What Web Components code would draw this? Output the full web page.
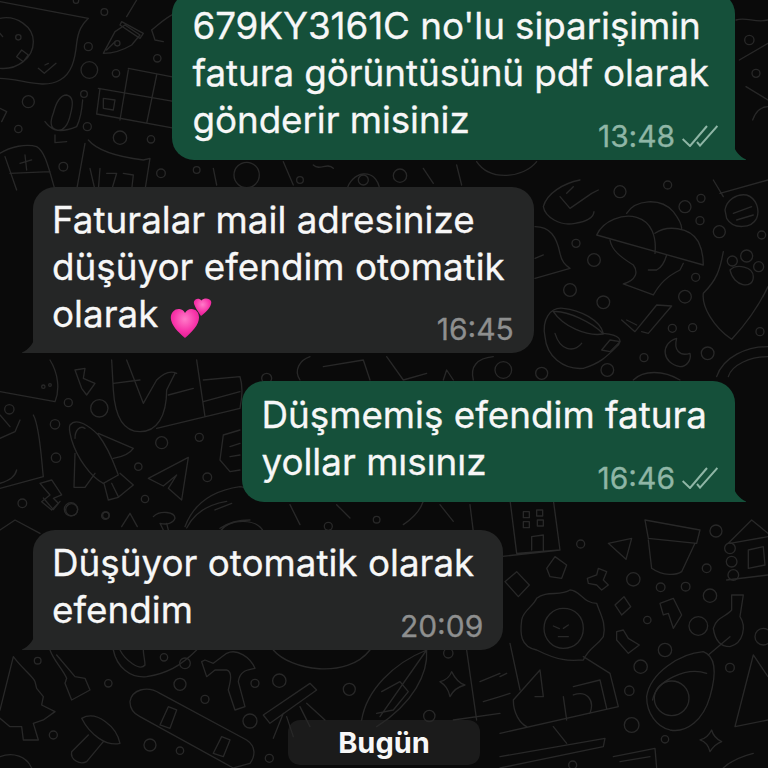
<!DOCTYPE html>
<html lang="tr">
<head>
<meta charset="utf-8">
<title>Sohbet</title>
<style>
  html, body { margin: 0; height: 100%; background: #0a0a0a; }
  chat-bubble:nth-of-type(1) { margin-bottom: -1px; padding-left: 20px; padding-right: 26px; letter-spacing: -0.07px; }
  chat-bubble:nth-of-type(2) { padding-bottom: 16px; }
</style>
</head>
<body>
<chat-screen>
  <chat-bubble side="out" time="13:48">679KY3161C no'lu siparişimin<br>fatura görüntüsünü pdf olarak<br>gönderir misiniz</chat-bubble>
  <chat-bubble side="in" time="16:45">Faturalar mail adresinize<br>düşüyor efendim otomatik<br>olarak <love-hearts></love-hearts></chat-bubble>
  <chat-bubble side="out" time="16:46">Düşmemiş efendim fatura<br>yollar mısınız</chat-bubble>
  <chat-bubble side="in" time="20:09">Düşüyor otomatik olarak<br>efendim</chat-bubble>
  <day-chip>Bugün</day-chip>
</chat-screen>

<script>
// doodles are written in the coordinates of 3x crops, hence the scale(1/3) on each group
const DOODLES = [
  { x: 0, y: 0, paths: [
    'M0 55C50 45 100 80 100 125C100 175 50 210 0 205M0 100l8 10M50 170L65 150L85 165L70 185z',
    'M0 5L265 55C245 75 235 90 230 130C225 180 215 220 180 240C130 270 60 235 0 235M115 205l18 15l35-30M135 195l10-5',
    'M310 160L345 95L375 75L420 105L395 135C370 150 340 160 310 160zM365 65L430 100L420 115L360 75zM380 50L410 0M345 125L320 150',
    'M160 340C170 300 185 285 200 285C220 290 220 310 212 340C205 375 190 395 170 390C150 385 150 365 160 340zM135 365C150 385 170 405 230 380C240 360 245 340 248 300M165 405L165 428L200 425',
    'M295 265L525 305M290 342L525 385M300 265L290 342M385 210L360 360M470 225L440 370M385 205L525 232M310 295L345 300L340 330L310 325z',
    'M0 460C30 440 80 430 110 440C135 455 145 500 165 570M15 470L50 570M30 520L150 515M60 490L95 480M75 465L80 510',
    'M265 420C290 450 350 470 430 480L450 475L435 570M255 430L230 570M270 505L285 570M300 505L295 570M320 520L350 520L335 570M370 520L400 525L395 570',
    'M455 90C480 70 500 50 525 40M455 90L465 120L490 125M0 325L20 335L5 365'
  ], dots: [[313,36,10],[265,140,12],[268,210,25],[348,220,11],[252,282,10],[85,305,18],[55,387,11],[262,380,12],[360,413,20],[453,418,11],[472,175,11],[483,520,13],[190,500,13],[228,2,8],[352,130,8],[55,112,8]] },
  { x: 520, y: 180, paths: [
    'M230 165C250 120 310 100 350 112C395 125 410 170 405 220M320 100C345 60 420 50 460 95C475 115 485 130 485 145M405 160C440 135 510 140 535 185C545 205 550 235 550 255L230 165',
    'M270 180C275 210 300 230 340 255C355 275 350 300 310 312L400 345C420 310 440 290 480 270L490 250M385 270L410 270Q430 260 440 225',
    'M610 215C600 270 590 300 550 340C545 380 580 440 635 478C680 430 720 370 744 320M630 270C640 320 700 330 700 290C700 260 650 250 630 270z',
    'M75 470C65 420 90 380 130 385C180 390 240 420 250 460C300 465 310 480 290 500C260 530 240 550 190 565C130 570 80 530 75 470zM100 395C140 390 220 430 250 462C200 470 130 440 100 395zM105 460C120 510 160 520 185 490',
    'M245 510L270 480L300 485L270 515zM305 420L345 455L410 375L455 378L385 460L365 455M320 420L350 435',
    'M470 475C420 490 425 550 480 560C500 560 515 540 510 520C480 530 460 510 470 475z',
    'M70 80C80 40 130 10 180 0M70 80C75 110 120 140 165 130C200 125 220 115 222 95M120 50L150 85L215 40L235 30M140 40L160 20',
    'M45 140C90 140 110 170 120 220C125 245 135 255 150 265L45 295M45 235L70 225',
    'M615 90C620 60 650 40 680 45C710 55 720 90 710 115C695 145 640 150 620 115zM640 100L695 80M650 120L700 105M600 40L744 0M580 0L610 50',
    'M590 590C610 530 680 500 744 500M625 590C635 555 690 530 744 530M340 600C370 570 430 570 480 600'
  ], dots: [[300,35,18],[443,15,12],[495,80,18],[543,55,12],[540,122,12],[598,155,18],[725,165,12],[168,190,12],[222,240,19],[150,330,19],[250,367,19],[495,350,19],[527,292,12],[457,445,12],[518,443,12],[372,533,12],[563,520,19],[262,570,19],[65,580,18],[720,455,12],[637,243,15],[680,228,18],[716,260,15]] },
  { x: 0, y: 360, paths: [
    'M150 0C175 40 180 90 165 125L0 95M225 30L255 25L250 55L285 70L260 105L245 85L225 30',
    'M335 0L340 90C345 170 370 215 420 215C470 215 500 170 500 90L525 40M380 0L430 130L470 60C490 40 510 30 530 40M340 70L420 60M505 105L580 85',
    'M470 205L720 145M590 0L615 170M610 60L720 50C730 80 725 120 720 145M610 125L720 95',
    'M210 195C230 170 270 200 295 225C330 270 345 320 355 345L310 370C270 350 230 290 215 240C210 220 205 205 210 195zM295 220L400 265C390 280 370 290 340 295M225 280L222 382L255 382L285 340M312 370L325 420L355 412L400 375L360 340M335 370L355 410M225 235C225 210 240 195 255 205',
    'M445 355L565 292L545 420L505 385L530 345L490 378L445 355z',
    'M120 370L155 360L185 405L160 415L175 430L155 450L125 425L150 405z',
    'M100 165C120 200 125 310 130 350L0 385M60 180L45 215L0 235M0 165L30 200M0 370C30 360 45 350 50 330',
    'M365 500L390 460L412 500M460 470C480 450 525 455 525 475C520 490 500 495 480 490L490 510M500 490L505 510',
    'M555 500C585 420 650 390 720 380L750 385M645 450L695 430M660 505C690 485 720 480 750 480M0 510L45 480L120 520',
    'M670 225L720 210M660 300L670 225M660 300L690 335L720 330M690 260L720 250M690 290L720 285'
  ], dots: [[205,128,12],[298,145,26],[28,148,14],[165,193,14],[485,248,18],[598,232,12],[168,293,14],[415,320,11],[622,352,13],[67,430,13],[213,448,20],[435,417,11],[316,467,11],[130,80,5],[150,75,4]] },
  { x: 0, y: 640, paths: [
    'M40 50L0 210M40 50C70 90 100 110 105 125L110 145L130 170L125 195L165 215L130 240L100 250L115 300L70 300L65 260L30 260L0 235',
    'M150 30C160 60 190 90 200 115L195 130L215 180L270 150L255 115L225 110L170 45',
    'M340 30C350 80 390 115 440 110C500 100 540 80 590 30M360 30C375 60 420 95 435 75C435 60 430 45 430 30',
    'M605 65L620 110L645 90L680 90C700 95 690 130 685 150L705 210L735 200L715 125C720 90 745 90 765 85C750 50 710 25 680 40L640 70L615 60z',
    'M390 185C395 150 440 135 480 160L740 300C770 320 765 350 750 370L700 384L420 230C400 220 390 205 390 185zM480 255L505 200L530 210L510 265zM640 340L665 290L690 300L670 350z',
    'M790 225L930 130L950 150L810 250zM850 220L820 295M920 190L975 240M860 230L880 290M900 200L930 260',
    'M245 235C290 210 350 260 360 310C320 320 270 285 245 235zM265 285L215 335C210 360 240 375 260 365L310 305',
    'M1085 240C1100 150 1180 70 1280 30C1285 100 1240 190 1130 260M1280 30L1140 230M1145 155L1200 125L1225 155L1180 210L1130 220',
    'M1320 125C1340 120 1350 110 1355 95C1365 115 1375 130 1395 135C1375 140 1360 150 1350 170C1345 145 1335 135 1320 125z',
    'M1400 30L1430 240M1440 125L1500 100M1450 185L1500 170M1360 240L1500 220M0 350C40 335 80 350 95 384M820 30C870 90 1040 120 1110 30'
  ], dots: [[113,62,10],[325,130,11],[492,52,11],[555,70,16],[540,133,18],[615,178,12],[765,130,12],[838,122,20],[750,243,21],[1048,148,18],[450,315,18],[540,332,11],[160,285,12],[808,355,12],[1288,228,17],[1345,40,14]] },
  { x: 500, y: 500, paths: [
    'M30 0L50 160L180 150L160 0M95 150L95 110L130 105L130 150M0 170L180 150M70 35h18v18h-18zM110 30h18v18h-18zM70 65h18v18h-18zM112 60h18v18h-18z',
    'M435 60L600 90L590 130L445 115zM445 120L455 205C490 230 530 225 545 215L585 130M325 130L395 115L378 178z',
    'M140 205L165 170L200 195L185 235L150 230zM262 235L290 225L295 205L320 215L310 240L325 255L305 270L290 255L265 250z',
    'M65 360C70 330 100 320 110 295C140 270 180 290 210 270C240 270 250 310 290 310C300 340 320 370 310 410C290 440 270 440 250 480C220 480 190 490 110 450C60 440 60 400 65 360z',
    'M132 385C132 350 160 325 190 325C225 325 250 350 250 385C250 420 225 445 190 445C160 445 132 420 132 385zM160 378l18 8M205 375l-15 10M175 410h30',
    'M120 510L40 600C40 640 60 670 80 680M250 470L330 520L355 620L0 700M220 560L300 540L320 625M190 590L200 660M220 585C260 570 285 600 270 640M120 510L130 590L105 590',
    'M350 395L370 390L385 415L418 435L385 460L350 420zM345 315L372 290L392 320L365 345zM15 245L50 215L88 255L55 290z',
    'M440 590C450 520 540 460 610 455C650 470 650 520 630 590C610 660 560 700 510 690C470 680 440 640 440 590zM458 600C470 540 560 500 620 520',
    'M640 385C650 350 680 350 695 330L695 285L730 285L720 350C740 380 730 430 690 440C660 440 645 420 640 385zM625 465L690 410',
    'M480 310L520 295L545 345L520 385L505 340L490 345z',
    'M760 465L705 680L804 660M760 465L804 530M600 720C620 715 630 700 635 690C640 710 655 720 665 725C650 730 640 740 630 755C625 735 615 725 600 720z',
    'M685 130L755 60L804 100M690 130L804 110M680 240L804 225M745 150L790 140L795 195L745 205z',
    'M0 770L315 715L310 740L0 804M340 770L465 745L470 804M360 785L450 770M160 680L200 730M30 430L60 570M0 530L20 520M0 590L30 580',
    'M760 760C720 770 690 785 670 804'
  ], dots: [[242,132,12],[400,238,20],[482,262,13],[557,260,13],[620,205,13],[630,287,20],[442,360,11],[595,378,28],[648,93,18],[495,450,20],[422,500,20],[388,572,14],[690,503,13],[395,675,22],[495,718,11],[218,795,12],[790,410,25],[515,595,52],[690,145,16],[695,185,16],[700,225,16]] },
  { x: 170, y: 155, paths: ['M130 40L140 90M340 20L370 90M430 30C450 50 470 20 490 40M530 108C540 50 620 30 630 108M760 40L790 85M860 30L875 90M920 20C960 80 1060 70 1100 20'],
    dots: [[80,45,10],[230,60,38],[390,75,10],[690,62,20],[580,75,15]] },
  { x: 230, y: 350, paths: ['M210 90C190 60 210 30 240 20M280 50L400 30L420 90M470 20L520 90L590 70M640 90L650 60L670 90M730 90C720 50 740 25 790 20'],
    dots: [[820,60,25],[110,85,15]] },
  { x: 30, y: 498, paths: ['M40 0L70 35L90 10M470 90C490 50 530 20 590 10M570 100C600 60 680 60 700 100M780 20L810 80M920 20L960 60M1120 80C1150 60 1170 40 1180 10M1230 20L1270 70M1320 20L1330 100'],
    dots: [[125,35,18],[228,52,10],[1040,65,10],[895,85,12]] },
  { x: 736, y: 0, paths: ['M0 60C30 50 60 70 96 60M10 180L96 130M30 260L96 300M50 360C60 330 80 320 96 320'],
    dots: [[40,120,14],[60,220,12]] }
];

class DoodleLayer extends HTMLElement {
  constructor() {
    super();
    const groups = DOODLES.map(({ x, y, paths, dots }) => {
      const lines = paths.map(d => `<path d="${d}"/>`).join('');
      const circles = dots.map(([cx, cy, r]) => `<circle cx="${cx}" cy="${cy}" r="${r}"/>`).join('');
      return `<g transform="translate(${x} ${y}) scale(0.3333)">${lines}${circles}</g>`;
    }).join('');
    this.attachShadow({ mode: 'open' }).innerHTML = `
      <style>
        :host { position: absolute; inset: 0; display: block; }
        svg { display: block; filter: blur(0.35px); }
        g { fill: none; stroke: #282828; stroke-width: 4; stroke-linejoin: round; stroke-linecap: round; }
      </style>
      <svg width="768" height="768" viewBox="0 0 768 768" aria-hidden="true">${groups}</svg>`;
  }
}

const screenTemplate = document.createElement('template');
screenTemplate.innerHTML = `
  <style>
    :host {
      position: relative;
      display: flex;
      flex-direction: column;
      justify-content: flex-end;
      gap: 28px;
      width: 768px;
      height: 768px;
      padding: 0 33px 3px;
      box-sizing: border-box;
      overflow: hidden;
      background: #0a0a0a;
      color: #f7f7f7;
      font-family: Inter, "Liberation Sans", sans-serif;
    }
  </style>
  <doodle-layer></doodle-layer>
  <slot></slot>
`;

class ChatScreen extends HTMLElement {
  constructor() {
    super();
    this.attachShadow({ mode: 'open' }).appendChild(screenTemplate.content.cloneNode(true));
  }
}

const bubbleTemplate = document.createElement('template');
bubbleTemplate.innerHTML = `
  <style>
    :host {
      position: relative;
      display: block;
      flex: none;
      width: fit-content;
      padding: 9px 29px 17px 19px;
      border-radius: 22px 22px 22px 0;
      background: #252626;
      font-size: 36.8px;
      line-height: 47px;
      -webkit-text-stroke: 0.3px currentColor;
      white-space: nowrap;
      --meta: #8e8f8f;
    }
    :host([side="out"]) {
      align-self: flex-end;
      padding: 10px 28px 17px 19px;
      border-radius: 22px 22px 0 22px;
      background: #15503a;
      --meta: #8fb6a6;
    }
    .meta {
      position: absolute;
      right: 20px;
      bottom: 10px;
      display: flex;
      align-items: center;
      gap: 7px;
      font-size: 30px;
      line-height: 28px;
      color: var(--meta);
    }
    .checks { display: none; width: 36px; height: 22px; fill: none; stroke: var(--meta); stroke-width: 2; }
    :host([side="out"]) .checks { display: block; }
    :host([side="out"]) .meta { right: 17px; bottom: 10px; }
    .tail { position: absolute; bottom: 0; width: 12px; height: 14px; fill: #252626; left: -11px; transform: scaleX(-1); }
    :host([side="out"]) .tail { left: auto; right: -11px; transform: none; fill: #15503a; }
  </style>
  <slot></slot>
  <span class="meta">
    <span class="time"></span>
    <svg class="checks" viewBox="0 0 36 22"><path d="M0.6 14L8 21L25 1"/><path d="M15 17L18 20.6L35.4 1"/></svg>
  </span>
  <svg class="tail" viewBox="0 0 12 14"><path d="M0 0C1 5 5 10 12 13.6L12 14L0 14Z"/></svg>
`;

class ChatBubble extends HTMLElement {
  constructor() {
    super();
    this.attachShadow({ mode: 'open' }).appendChild(bubbleTemplate.content.cloneNode(true));
  }

  connectedCallback() {
    this.shadowRoot.querySelector('.time').textContent = this.getAttribute('time');
  }
}

const heartsTemplate = document.createElement('template');
heartsTemplate.innerHTML = `
  <style>
    :host { display: inline-block; width: 44px; height: 42px; margin: -8px 0 -8px 1px; vertical-align: -4px; }
    svg { display: block; }
  </style>
  <svg width="44" height="42" viewBox="0 0 44 42" aria-hidden="true">
    <defs>
      <radialGradient id="pink" cx="0.5" cy="0.35" r="0.75">
        <stop offset="0" stop-color="#ff7cc9"/>
        <stop offset="0.55" stop-color="#f733a8"/>
        <stop offset="1" stop-color="#d9148c"/>
      </radialGradient>
    </defs>
    <path fill="url(#pink)" d="M31 19C27 13 23 7 24 4.500C25 1.500 29 .5 31.500 3.500C34 .5 39.500 1 41 4C42.500 7.500 38 14 31 19Z"/>
    <path fill="url(#pink)" d="M15 41C8 35 1 28 .8 21C.8 15 5 11.500 9.500 12C12 12.300 14 13.800 15 16C16 13.800 18.500 12 21.500 12C26 12 29 15.500 29 20.500C29 28 22 35 15 41Z"/>
  </svg>
`;

class LoveHearts extends HTMLElement {
  constructor() {
    super();
    this.attachShadow({ mode: 'open' }).appendChild(heartsTemplate.content.cloneNode(true));
  }
}

const chipTemplate = document.createElement('template');
chipTemplate.innerHTML = `
  <style>
    :host {
      display: block;
      flex: none;
      align-self: center;
      width: 192px;
      margin-top: 42px;
      box-sizing: border-box;
      padding: 0;
      border-radius: 12px;
      background: #1b1b1b;
      color: #f7f7f7;
      font-size: 29px;
      font-weight: 700;
      line-height: 45px;
      text-align: center;
    }
  </style>
  <slot></slot>
`;

class DayChip extends HTMLElement {
  constructor() {
    super();
    this.attachShadow({ mode: 'open' }).appendChild(chipTemplate.content.cloneNode(true));
  }
}

customElements.define('doodle-layer', DoodleLayer);
customElements.define('chat-screen', ChatScreen);
customElements.define('chat-bubble', ChatBubble);
customElements.define('love-hearts', LoveHearts);
customElements.define('day-chip', DayChip);
</script>
</body>
</html>
